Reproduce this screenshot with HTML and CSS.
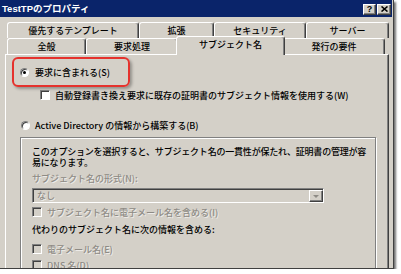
FILE: index.html
```html
<!DOCTYPE html>
<html lang="ja">
<head>
<meta charset="utf-8">
<title>TestTPのプロパティ</title>
<link rel="stylesheet" href="styles.css">
</head>
<body>
<div class="window">
  <div class="titlebar">
    <span class="title">TestTPのプロパティ</span>
    <div class="tbtns">
      <span class="tbtn help">?</span>
      <span class="tbtn close"><svg width="7" height="6" viewBox="0 0 7 6"><path d="M0.5 0.5 L6.5 5.5 M6.5 0.5 L0.5 5.5" stroke="#000" stroke-width="1.6" fill="none"/></svg></span>
    </div>
  </div>
  <div class="tabs">
    <div class="tabrow">
      <div class="tab w1">優先するテンプレート</div>
      <div class="tab w2">拡張</div>
      <div class="tab w3">セキュリティ</div>
      <div class="tab w4">サーバー</div>
    </div>
    <div class="tabrow">
      <div class="tab w5">全般</div>
      <div class="tab w6">要求処理</div>
      <div class="tab w7 selected">サブジェクト名</div>
      <div class="tab w8">発行の要件</div>
    </div>
  </div>
  <div class="panel">
    <div class="row r1"><span class="rb checked"></span><span>要求に含まれる(S)</span></div>
    <div class="row c1"><span class="cb"></span><span>自動登録書き換え要求に既存の証明書のサブジェクト情報を使用する(W)</span></div>
    <div class="row r2"><span class="rb"></span><span>Active Directory の情報から構築する(B)</span></div>
    <div class="group">
      <div class="desc">このオプションを選択すると、サブジェクト名の一貫性が保たれ、証明書の管理が容</div>
      <div class="desc">易になります。</div>
      <div class="lbl dis ln">サブジェクト名の形式(N):</div>
      <div class="select"><span class="val dis">なし</span><span class="arrow"><span class="tri"></span></span></div>
      <div class="row ci"><span class="cb off"></span><span class="dis">サブジェクト名に電子メール名を含める(I)</span></div>
      <div class="lbl alt">代わりのサブジェクト名に次の情報を含める:</div>
      <div class="row ce"><span class="cb off"></span><span class="dis">電子メール名(E)</span></div>
      <div class="row cd"><span class="cb off"></span><span class="dis">DNS 名(D)</span></div>
    </div>
    <div class="highlight"></div>
  </div>
</div>
</body>
</html>
```
FILE: styles.css
```css
* { box-sizing: border-box; }
html, body { margin: 0; padding: 0; background: #fff; }
body {
  font-family: "Noto Sans CJK JP", sans-serif;
  font-size: 9px;
  font-weight: 500;
  color: #000;
}
.window {
  width: 394px;
  height: 269px;
  background: #d4d0c8;
  border-right: 1px solid #404040;
  border-bottom: 1px solid #404040;
  box-shadow: 2px 2px 2px rgba(0,0,0,0.55);
  overflow: hidden;
  position: relative;
}
.titlebar {
  height: 17px;
  margin-right: 1px;
  background: #0a246a;
  display: flex;
  align-items: center;
  padding-left: 2px;
}
.title {
  color: #fff;
  font-family: "Liberation Sans", "Noto Sans CJK JP", sans-serif;
  font-weight: bold;
  font-size: 9.5px;
  line-height: 12px;
}
.tbtns {
  margin-left: auto;
  margin-right: 1px;
  display: flex;
  gap: 1px;
  margin-top: 1px;
}
.tbtn {
  width: 13px;
  height: 11px;
  background: #d4d0c8;
  border: 1px solid;
  border-color: #fff #404040 #404040 #fff;
  box-shadow: inset -1px -1px 0 #808080;
  display: flex;
  align-items: center;
  justify-content: center;
  font-family: "Liberation Sans", sans-serif;
  font-weight: bold;
  font-size: 9px;
  line-height: 9px;
}
.close { width: 14px; }
.tabs {
  margin-top: 5px;
  padding-left: 7px;
}
.tabrow {
  display: flex;
  height: 16px;
}
.tab {
  height: 16px;
  background: #d4d0c8;
  border: 1px solid;
  border-bottom: none;
  border-color: #fff #404040 transparent #fff;
  border-radius: 3px 3px 0 0;
  box-shadow: inset -1px 0 0 #808080;
  text-align: center;
  line-height: 14px;
  padding-top: 1px;
  white-space: nowrap;
}
.w1 { width: 132px; }
.w2 { width: 75px; }
.w3 { width: 92px; }
.w4 { width: 83px; }
.w5 { width: 79px; }
.w6 { width: 92px; }
.w7 { width: 109px; }
.w8 { width: 102px; }
.tab.selected {
  height: 19px;
  margin: -2px -2px -1px;
  position: relative;
  z-index: 2;
  line-height: 14px;
  padding-top: 1px;
}
.panel {
  margin-left: 5px;
  width: 384px;
  height: 240px;
  border-top: 1px solid #fff;
  border-left: 1px solid #fff;
  border-right: 1px solid #404040;
  box-shadow: inset -1px 0 0 #808080;
  position: relative;
  overflow: hidden;
}
.row {
  display: flex;
  align-items: center;
  white-space: nowrap;
}
.r1 { margin-top: 10px; height: 14px; padding-left: 14px; gap: 6px; }
.c1 { margin-top: 9px; height: 14px; padding-left: 34px; gap: 5px; }
.r2 { margin-top: 16px; height: 14px; padding-left: 15px; gap: 5px; }
.rb {
  width: 9px;
  height: 9px;
  border-radius: 50%;
  background: #fff;
  border: 1px solid;
  border-color: #808080 #fff #fff #808080;
  box-shadow: inset 1px 1px 0 #404040;
  position: relative;
  flex: none;
}
.rb.checked::after {
  content: "";
  position: absolute;
  left: 2px;
  top: 2px;
  width: 3px;
  height: 3px;
  border-radius: 50%;
  background: #000;
}
.cb {
  width: 10px;
  height: 10px;
  background: #fff;
  border: 1px solid;
  border-color: #808080 #fff #fff #808080;
  box-shadow: inset 1px 1px 0 #404040;
  flex: none;
}
.cb.off { background: #d4d0c8; }
.group {
  margin: 5px 0 0 14px;
  width: 356px;
  height: 150px;
  border: 1px solid #808080;
  box-shadow: inset 1px 1px 0 #fff, 1px 1px 0 #fff;
  padding: 8px 0 0 11px;
}
.desc {
  height: 11px;
  line-height: 11px;
  letter-spacing: -0.2px;
  white-space: nowrap;
}
.lbl { line-height: 11px; height: 11px; white-space: nowrap; }
.ln { margin-top: 5px; }
.dis {
  color: #8e8b85;
  text-shadow: 1px 1px 0 rgba(255,255,255,0.6);
}
.select {
  margin-top: 4px;
  width: 292px;
  height: 15px;
  display: flex;
  align-items: stretch;
  border: 1px solid;
  border-color: #808080 #fff #fff #808080;
  box-shadow: inset 1px 1px 0 #404040;
  background: #d4d0c8;
  padding: 1px 0 0 1px;
}
.val { padding-left: 3px; line-height: 12px; }
.arrow {
  margin-left: auto;
  width: 14px;
  border: 1px solid;
  border-color: #fff #404040 #404040 #fff;
  box-shadow: inset -1px -1px 0 #808080;
  display: flex;
  align-items: center;
  justify-content: center;
}
.tri {
  width: 0;
  height: 0;
  border-left: 3px solid transparent;
  border-right: 3px solid transparent;
  border-top: 3px solid #8e8b85;
}
.ci { margin-top: 3px; height: 12px; gap: 5px; }
.alt { margin-top: 6px; height: 12px; line-height: 12px; }
.ce { margin-top: 7px; height: 12px; gap: 5px; }
.cd { margin-top: 4px; height: 12px; gap: 5px; }
.highlight {
  position: absolute;
  left: 6px;
  top: 2px;
  width: 118px;
  height: 30px;
  border: 2px solid #e5322d;
  border-radius: 6px;
  box-shadow: 2px 2px 3px rgba(0,0,0,0.3);
}
```
